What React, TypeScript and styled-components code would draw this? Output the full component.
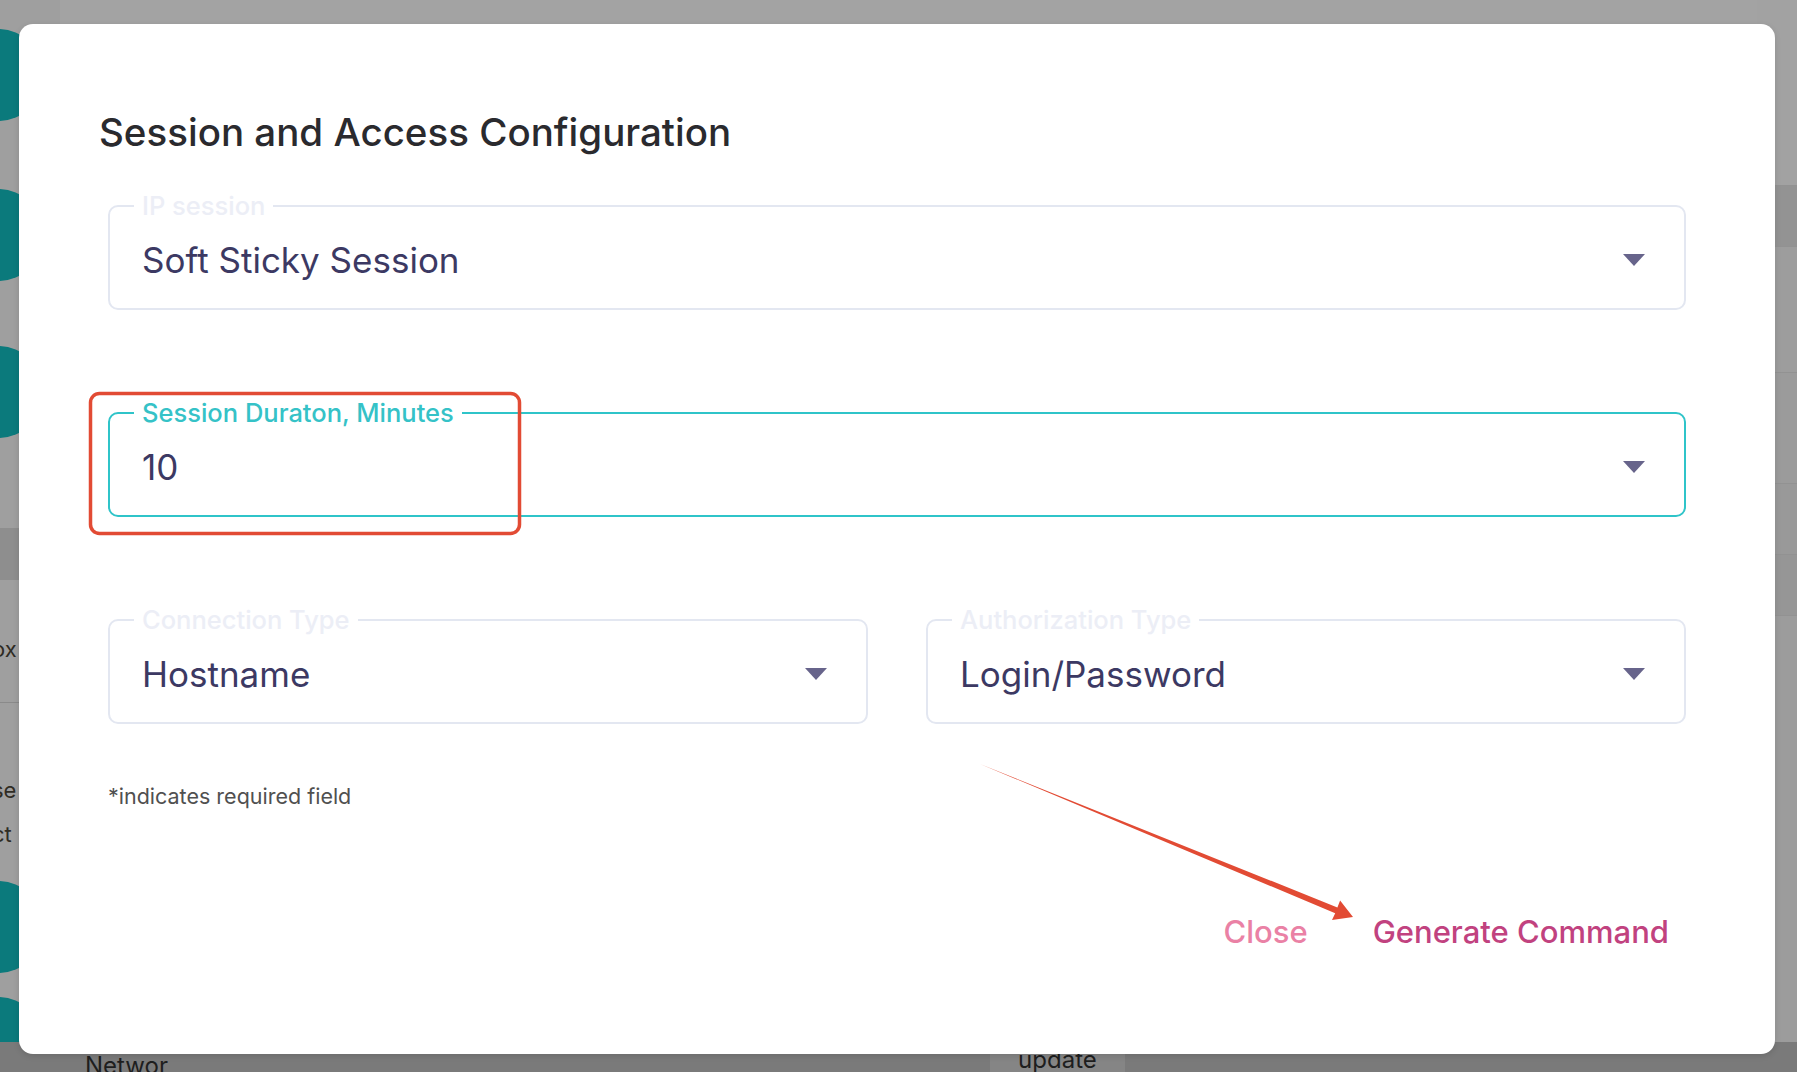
import React from "react";
import styled, { createGlobalStyle } from "styled-components";

const GlobalStyle = createGlobalStyle`
  html, body {
    margin: 0;
    padding: 0;
  }
  body {
    font-family: Inter, "Noto Sans", Arial, sans-serif;
    background: #a3a3a3;
    overflow: hidden;
  }
`;

const Page = styled.div`
  position: relative;
  width: 1797px;
  height: 1072px;
  overflow: hidden;
`;

/* dimmed application under the dialog */
const AppShell = styled.div`
  display: grid;
  grid-template-columns: 60px 1fr 40px;
  grid-template-rows: 1fr 30px;
  height: 100%;
  background: #a3a3a3;
`;

const Rail = styled.div`
  display: flex;
  flex-direction: column;
  overflow: hidden;
  background: #9f9f9f;
`;

const RailBubble = styled.div<{ $top: number }>`
  width: 92px;
  height: 92px;
  flex: none;
  margin: ${({ $top }) => $top}px 0 0 -48px;
  border-radius: 50%;
  background: #0b7a7c;
`;

const RailBand = styled.div<{ $top: number; $h: number; $bg: string }>`
  flex: none;
  margin-top: ${({ $top }) => $top}px;
  height: ${({ $h }) => $h}px;
  background: ${({ $bg }) => $bg};
`;

const RailText = styled.div<{ $top: number }>`
  flex: none;
  margin: ${({ $top }) => $top}px 0 0 -8px;
  font-size: 22px;
  color: #2f2c24;
  line-height: 26px;
`;

const Main = styled.div`
  background: #a3a3a3;
`;

const RightCol = styled.div`
  display: flex;
  flex-direction: column;
  background: #9c9c9c;
`;

const RightBand = styled.div<{ $h: number; $bg: string }>`
  flex: none;
  height: ${({ $h }) => $h}px;
  background: ${({ $bg }) => $bg};
  border-bottom: 1px solid #929292;
  font-size: 18px;
  color: #2a2f55;
  display: flex;
  align-items: center;
`;

const BottomBar = styled.div`
  grid-column: 1 / -1;
  display: flex;
  align-items: flex-end;
  background: #7a7a7a;
  padding-left: 85px;
  font-size: 24px;
  color: #1e1e1e;
`;

const BottomLabel = styled.div`
  line-height: 24px;
  margin-bottom: -6px;
`;

const BottomButton = styled.div`
  margin-left: 822px;
  width: 135px;
  height: 100%;
  background: #858585;
  display: flex;
  align-items: flex-end;
  justify-content: center;
  line-height: 24px;
`;

/* dialog */
const Overlay = styled.div`
  position: absolute;
  inset: 0;
  padding: 24px 22px 18px 19px;
  box-sizing: border-box;
`;

const Modal = styled.div`
  width: 1756px;
  height: 1030px;
  box-sizing: border-box;
  background: #ffffff;
  border-radius: 14px;
  box-shadow: 0 2px 6px rgba(0, 0, 0, 0.12);
  padding: 85px 89px 0 80px;
  display: flex;
  flex-direction: column;
`;

const Title = styled.h2`
  margin: 0;
  font-size: 38.5px;
  line-height: 46px;
  font-weight: 500;
  color: #2a2a2e;
`;

const Form = styled.div`
  display: flex;
  flex-direction: column;
  gap: 88px;
  margin: 36px 0 0 9px;
`;

const Row = styled.div`
  display: grid;
  grid-template-columns: 1fr 1fr;
  gap: 58px;
`;

const Field = styled.fieldset<{ $focused?: boolean }>`
  margin: 0;
  min-width: 0;
  padding: 0 39px 8px 24px;
  border: 2px solid ${({ $focused }) => ($focused ? "#2fc4c9" : "#e3e7f1")};
  border-radius: 10px;
`;

const Legend = styled.legend<{ $focused?: boolean }>`
  padding: 0 8px;
  font-size: 25.5px;
  line-height: 30px;
  font-weight: 500;
  color: ${({ $focused }) => ($focused ? "#35c2c7" : "#eceef6")};
`;

const Control = styled.div`
  height: 80px;
  display: flex;
  align-items: center;
  justify-content: space-between;
  padding-left: 8px;
  margin-top: -1px;
`;

const Value = styled.span`
  font-size: 35px;
  font-weight: 400;
  color: #3c3963;
`;

const Note = styled.p`
  margin: 59px 0 0 9px;
  font-size: 21.5px;
  line-height: 26px;
  color: #505050;
`;

const Actions = styled.div`
  display: flex;
  justify-content: flex-end;
  align-items: center;
  gap: 65px;
  margin-top: 104px;
  padding-right: 17px;
`;

const TextButton = styled.button<{ $tone: string }>`
  border: none;
  background: none;
  padding: 0;
  font-family: inherit;
  font-size: 31px;
  line-height: 38px;
  font-weight: 500;
  color: ${({ $tone }) => $tone};
  cursor: pointer;
`;

const Annotation = styled.svg`
  position: absolute;
  inset: 0;
  pointer-events: none;
`;

const Caret = () => (
  <svg width="22" height="12" viewBox="0 0 22 12">
    <path d="M0 0h22L11 12z" fill="#67648b" />
  </svg>
);

type SelectProps = {
  label: string;
  value: string;
  focused?: boolean;
};

const SelectField: React.FC<SelectProps> = ({ label, value, focused }) => (
  <Field $focused={focused}>
    <Legend $focused={focused}>{label}</Legend>
    <Control>
      <Value>{value}</Value>
      <Caret />
    </Control>
  </Field>
);

export default function App() {
  return (
    <Page>
      <GlobalStyle />
      <AppShell>
        <Rail>
          <RailBubble $top={29} />
          <RailBubble $top={68} />
          <RailBubble $top={65} />
          <RailBand $top={90} $h={52} $bg="#8e8e8e" />
          <RailText $top={56}>ox</RailText>
          <RailBand $top={40} $h={1} $bg="#8a8a8a" />
          <RailText $top={74}>se</RailText>
          <RailText $top={18}>ct</RailText>
          <RailBubble $top={34} />
          <RailBubble $top={24} />
        </Rail>
        <Main />
        <RightCol>
          <RightBand $h={185} $bg="#a2a2a2" />
          <RightBand $h={60} $bg="#939393" />
          <RightBand $h={125} $bg="#9d9d9d" />
          <RightBand $h={110} $bg="#9b9b9b" />
          <RightBand $h={70} $bg="#999999">.n</RightBand>
          <RightBand $h={60} $bg="#969696" />
        </RightCol>
        <BottomBar>
          <BottomLabel>Networ</BottomLabel>
          <BottomButton>update</BottomButton>
        </BottomBar>
      </AppShell>

      <Overlay>
        <Modal>
          <Title>Session and Access Configuration</Title>
          <Form>
            <SelectField label="IP session" value="Soft Sticky Session" />
            <SelectField label="Session Duraton, Minutes" value="10" focused />
            <Row>
              <SelectField label="Connection Type" value="Hostname" />
              <SelectField label="Authorization Type" value="Login/Password" />
            </Row>
          </Form>
          <Note>*indicates required field</Note>
          <Actions>
            <TextButton $tone="#ea81a5">Close</TextButton>
            <TextButton $tone="#c1427f">Generate Command</TextButton>
          </Actions>
        </Modal>
      </Overlay>

      <Annotation width="1797" height="1072" viewBox="0 0 1797 1072">
        <rect x="90.5" y="393.5" width="429" height="140" rx="9" fill="none" stroke="#e24b34" strokeWidth="3.5" />
        <polygon
          points="980,764 1337.4,907.4 1340.1,900.5 1353,917 1332,920 1335.2,913.2"
          fill="#e24b34"
        />
      </Annotation>
    </Page>
  );
}
